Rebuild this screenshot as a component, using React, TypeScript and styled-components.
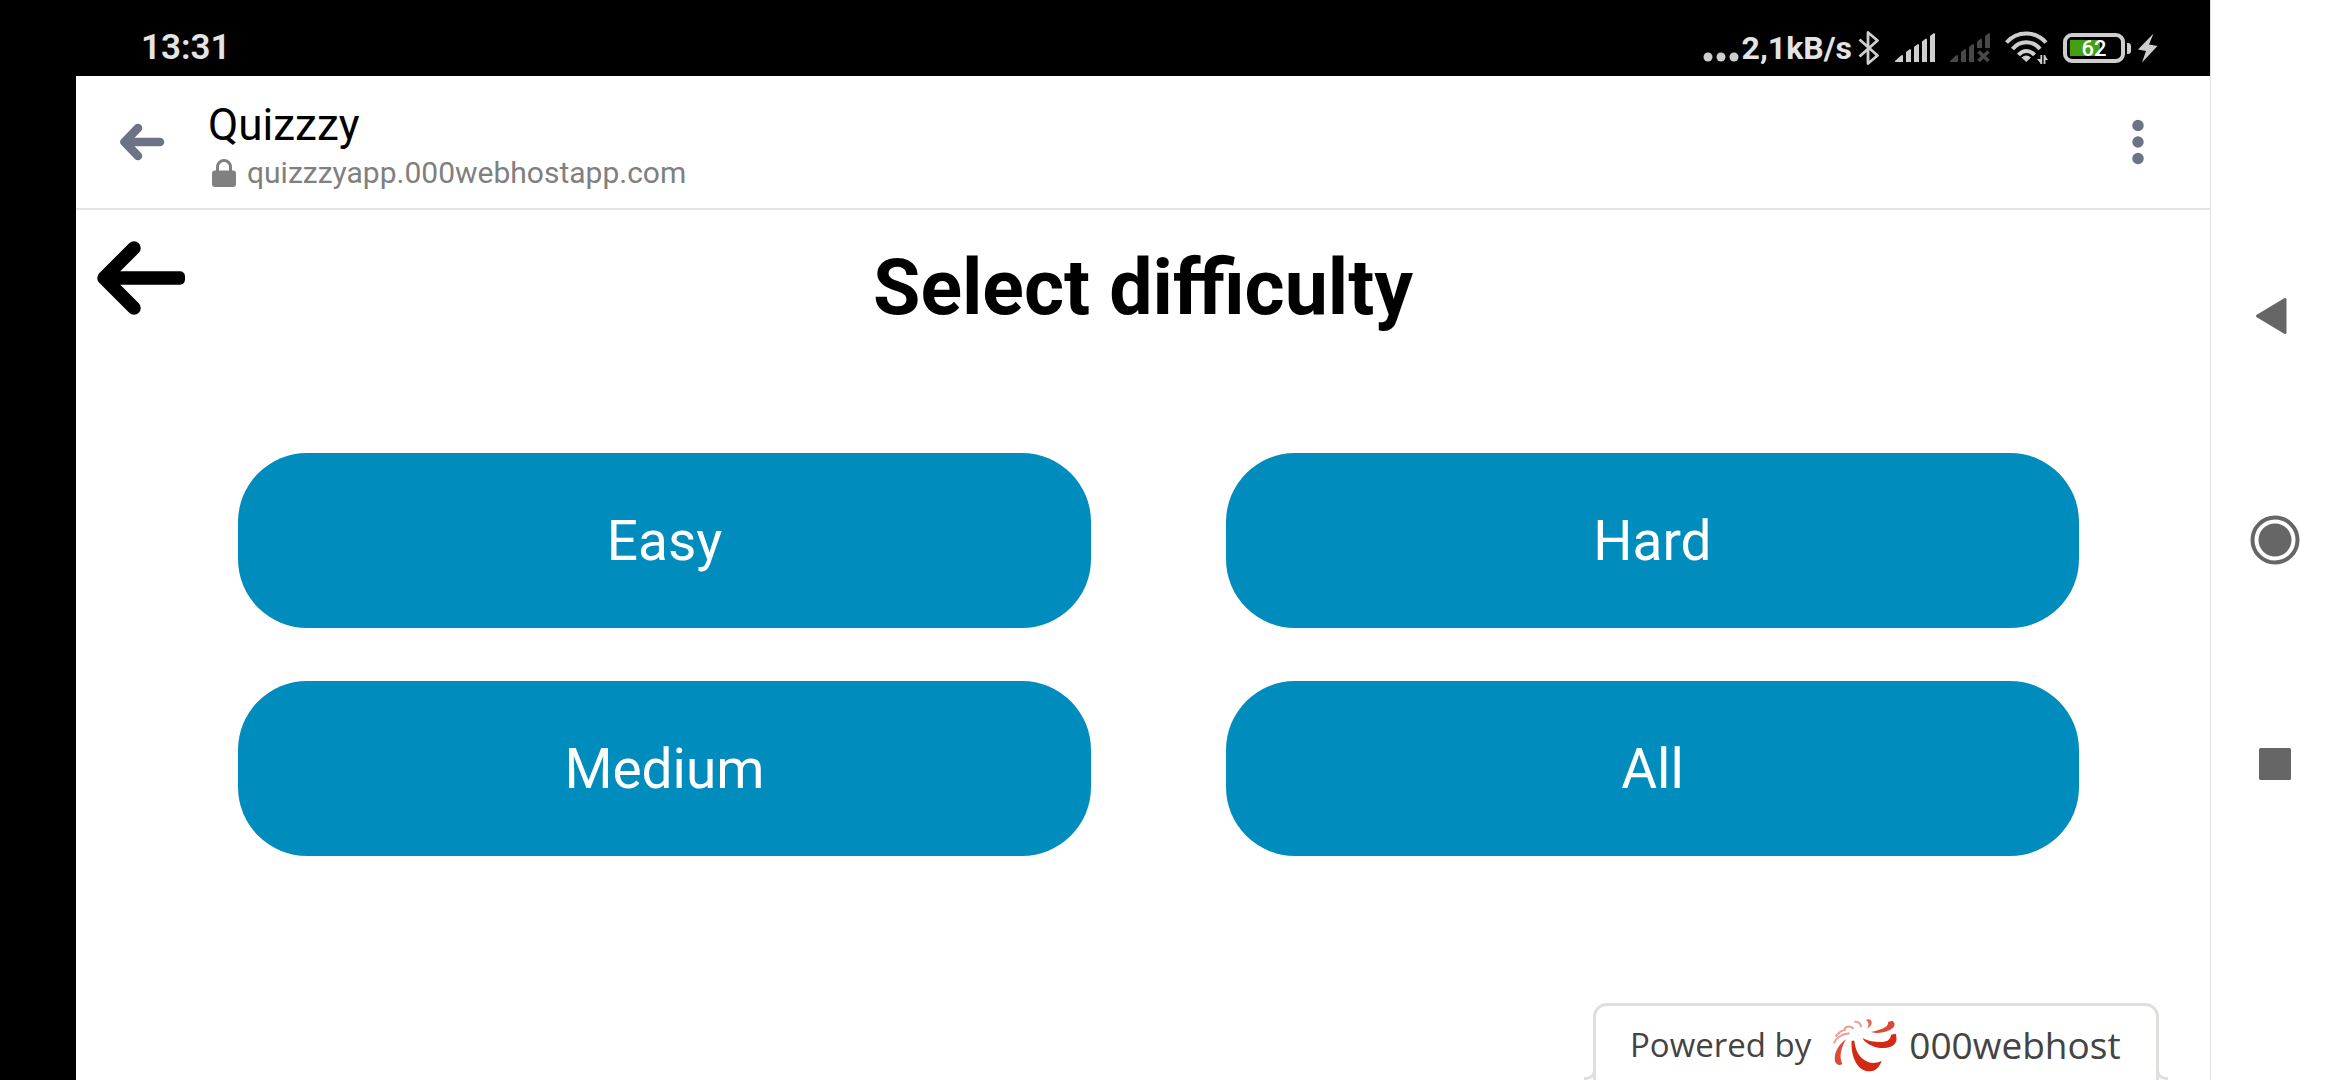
import React from "react";
import styled, { createGlobalStyle } from "styled-components";

const GlobalStyle = createGlobalStyle`
  *, *::before, *::after { box-sizing: border-box; }
  html, body { margin: 0; background: #fff; }
  body { font-family: Roboto, "Liberation Sans", sans-serif; overflow: hidden; }
  button { font: inherit; border: 0; padding: 0; background: none; cursor: pointer; }
  svg { display: block; flex: none; }
`;

const Screen = styled.div`
  display: grid;
  grid-template-columns: minmax(0, 1fr) 130px;
  min-height: 100vh;
`;

const Device = styled.div`
  display: flex;
  flex-direction: column;
  background: #000;
`;

const StatusBar = styled.div`
  display: flex;
  align-items: center;
  justify-content: space-between;
  height: 76px;
  padding: 20px 52px 0 141px;
  color: #e4e4e4;
  font-size: 35px;
  line-height: 56px;
  font-weight: 600;
`;

const StatusIcons = styled.div`
  display: flex;
  align-items: center;
  gap: 15px;
`;

const Speed = styled.div`
  display: flex;
  align-items: center;
  gap: 3px;
  margin-right: -9px;
  font-size: 32px;
  font-weight: 700;
`;

const Power = styled.div`
  display: flex;
  align-items: center;
  gap: 2px;
`;

const Battery = styled.div<{ $level: number }>`
  display: flex;
  align-items: center;
  justify-content: center;
  width: 62px;
  height: 30px;
  border: 4px solid #cecece;
  border-radius: 9px;
  background: linear-gradient(#43a010, #43a010) 3px 3px / ${(p) => Math.round(p.$level * 0.48)}px 16px no-repeat;
  color: #fff;
  font-size: 22px;
  line-height: 22px;
  padding-top: 2px;
  font-weight: 500;
`;

const BatteryTip = styled.span`
  width: 4px;
  height: 11px;
  margin-right: 5px;
  border-radius: 0 3px 3px 0;
  background: #cecece;
`;

const Browser = styled.div`
  flex: 1;
  display: flex;
  flex-direction: column;
  margin-left: 76px;
  background: #fff;
`;

const AppBar = styled.header`
  display: flex;
  align-items: center;
  height: 134px;
  padding: 0 64px 0 42px;
  border-bottom: 2px solid #e4e4e4;
`;

const Site = styled.div`
  flex: 1;
  margin-left: 42px;
  padding-top: 9px;
`;

const SiteName = styled.div`
  font-size: 44px;
  line-height: 52px;
  color: #000;
`;

const SiteUrl = styled.div`
  display: flex;
  align-items: center;
  gap: 11px;
  padding-left: 4px;
  font-size: 30px;
  line-height: 44px;
  color: #808080;
`;

const Page = styled.main`
  flex: 1;
  display: flex;
  flex-direction: column;
`;

const TitleRow = styled.div`
  display: grid;
  grid-template-columns: 130px 1fr 130px;
  align-items: start;
  padding-top: 28px;
`;

const BackButton = styled.button`
  justify-self: start;
  margin-left: 18px;
`;

const Title = styled.h1`
  margin: 0;
  padding-top: 4px;
  text-align: center;
  font-size: 77px;
  line-height: 92px;
  font-weight: 700;
  color: #000;
`;

const Choices = styled.div`
  display: grid;
  grid-template-columns: 1fr 1fr;
  gap: 53px 135px;
  padding: 119px 131px 0 162px;
`;

const Choice = styled.button`
  height: 175px;
  border-radius: 69px;
  background: #008cbc;
  color: #fff;
  font-size: 55px;
  line-height: 66px;
`;

const HostBadge = styled.a`
  position: relative;
  display: flex;
  align-items: center;
  align-self: flex-end;
  gap: 22px;
  width: 566px;
  height: 77px;
  margin: auto 51px 0 0;
  padding: 4px 0 0 34px;
  border: 3px solid #dfdfdb;
  border-bottom: 0;
  border-radius: 14px 14px 0 0;
  background: #fff;
  color: #444;
  font-family: "Open Sans", "Noto Sans", sans-serif;
  font-size: 33px;
  line-height: 48px;
  text-decoration: none;

  &::before, &::after {
    content: "";
    position: absolute;
    bottom: 0;
    width: 12px;
    height: 10px;
    background: #fff;
    border-bottom: 3px solid #dfdfdb;
  }
  &::before {
    left: -12px;
    border-right: 3px solid #dfdfdb;
    border-bottom-right-radius: 10px;
  }
  &::after {
    right: -12px;
    border-left: 3px solid #dfdfdb;
    border-bottom-left-radius: 10px;
  }
`;

const HostName = styled.span`
  font-size: 37px;
  margin-left: -10px;
`;

const NavBar = styled.nav`
  display: flex;
  flex-direction: column;
  justify-content: center;
  padding-right: 2px;
  border-left: 1px solid #e0e0e0;
  background: #fff;
`;

const NavButton = styled.button`
  display: flex;
  align-items: center;
  justify-content: center;
  height: 224px;
`;

const IconButton = styled.button`
  display: block;
`;

function Bluetooth() {
  return (
    <svg width="22" height="36" viewBox="0 0 22 36" fill="none" stroke="#cecece" strokeWidth="2.8" strokeLinejoin="round">
      <path d="M1.500 9.500 L19.500 25.500 L10 33.500 V2.500 L19.500 10.500 L1.500 26.500" />
    </svg>
  );
}

function Signal({ off = false }: { off?: boolean }) {
  const end = off ? 15 : 29;
  return (
    <svg width="40" height="30" viewBox="0 0 40 30" fill={off ? "#484848" : "#cecece"}>
      <path d="M0 29 V28 L6 22.500 Q8 21.500 8 23 V29 Z" />
      <path d="M11 29 V19 L14.500 16.300 Q16 15.800 16 17 V29 Z" />
      <path d="M19 29 V14 L22.500 11.300 Q24 10.800 24 12 V29 Z" />
      <path d={`M27 ${end} V8.500 L30.500 5.800 Q32 5.300 32 6.500 V${end} Z`} />
      <path d={`M35 ${end} V3 L38.500 0.300 Q40 0 40 1 V${end} Z`} />
      {off && <path d="M28.500 18.500 L38.500 28 M38.500 18.500 L28.500 28" stroke="#484848" strokeWidth="3.600" />}
    </svg>
  );
}

function Wifi() {
  return (
    <svg width="43" height="34" viewBox="0 0 43 34" fill="none" stroke="#cecece" strokeWidth="4">
      <path d="M1.500 11.500 C12 -0.500 30 -0.500 41 11.500" />
      <path d="M7.500 18 C15 9 27.500 9 35 18" />
      <path d="M13.500 24 C18 18.500 25 18.500 29.500 24" />
      <path d="M16.500 26.500 Q21.300 22.500 26 26.500 L21.300 31 Z" fill="#cecece" stroke="none" />
      <path d="M36.300 24 V33 M39.500 24 V33" strokeWidth="1.800" />
      <path d="M32 28 H36 V33 Z M43 29 H39.500 V24 Z" fill="#cecece" stroke="none" />
    </svg>
  );
}

function HostLogo() {
  return (
    <svg width="64" height="54" viewBox="42 48 192 162" fill="#d42a14">
      <path d="M98 116 C94 165 118 216 160 207 C175 203 183 190 188 176 C170 185 152 185 137 175 C120 163 109 145 106 116 Z" />
      <path d="M130 108 C148 136 190 144 215 134 C234 126 235 110 230 95 L216 98 C215 112 205 120 185 120 C165 120 148 117 130 108 Z" />
      <path d="M156 90 C180 97 206 90 222 78 C229 70 228 61 220 56 L207 60 C210 72 195 82 156 90 Z" opacity="0.850" />
      <path d="M140 54 C152 49 159 54 158 64 C157 71 152 76 144 80 C150 70 151 60 140 54 Z" opacity="0.700" />
      <path d="M82 111 C56 130 44 155 48 178 C52 189 62 192 70 186 C60 165 65 138 82 111 Z" opacity="0.850" />
      <g fill="none" stroke="#d42a14" strokeWidth="6" opacity="0.450">
        <path d="M44 124 C52 106 70 96 92 94" />
        <path d="M50 104 C58 92 68 85 80 84" />
        <path d="M76 86 C76 74 90 68 104 80" />
        <path d="M106 60 C116 58 124 64 127 76" />
      </g>
    </svg>
  );
}

const levels = ["Easy", "Hard", "Medium", "All"];

export default function App() {
  return (
    <>
      <GlobalStyle />
      <Screen>
        <Device>
          <StatusBar>
            <time>13:31</time>
            <StatusIcons>
              <Speed>
                <svg width="36" height="30" viewBox="0 0 36 30" fill="#cecece">
                  <circle cx="5" cy="24" r="4.500" />
                  <circle cx="18" cy="24" r="4.500" />
                  <circle cx="31" cy="24" r="4.500" />
                </svg>
                <span>2,1kB/s</span>
              </Speed>
              <Bluetooth />
              <Signal />
              <Signal off />
              <Wifi />
              <Power>
                <Battery $level={62}>62</Battery>
                <BatteryTip />
                <svg width="20" height="30" viewBox="0 0 20 30" fill="#cecece">
                  <path d="M15.500 0.500 L0 16.500 L8 18 L4 29.500 L19.500 13 L11 11.500 Z" />
                </svg>
              </Power>
            </StatusIcons>
          </StatusBar>
          <Browser>
            <AppBar>
              <IconButton aria-label="Back">
                <svg width="48" height="40" viewBox="0 0 48 40" fill="none" stroke="#6c7387" strokeWidth="8.500" strokeLinecap="round" strokeLinejoin="round">
                  <path d="M20 6 L6.500 20 L20 34 M8 20 H42" />
                </svg>
              </IconButton>
              <Site>
                <SiteName>Quizzzy</SiteName>
                <SiteUrl>
                  <svg width="24" height="28" viewBox="0 0 24 28">
                    <path d="M5.500 13 V8 A6.500 6.500 0 0 1 18.500 8 V13" fill="none" stroke="#808080" strokeWidth="3" />
                    <rect y="11.500" width="24" height="16.500" rx="3" fill="#808080" />
                  </svg>
                  <span>quizzzyapp.000webhostapp.com</span>
                </SiteUrl>
              </Site>
              <IconButton aria-label="More options">
                <svg width="16" height="46" viewBox="0 0 16 46" fill="#6c7387">
                  <circle cx="8" cy="6.500" r="5.700" />
                  <circle cx="8" cy="23" r="5.700" />
                  <circle cx="8" cy="39.500" r="5.700" />
                </svg>
              </IconButton>
            </AppBar>
            <Page>
              <TitleRow>
                <BackButton aria-label="Go back">
                  <svg width="94" height="80" viewBox="0 0 94 80" fill="none" stroke="#000" strokeWidth="13.500" strokeLinecap="round" strokeLinejoin="round">
                    <path d="M40 10 L10 40 L40 70" />
                    <rect x="10" y="33.250" width="81" height="13.500" rx="5" fill="#000" stroke="none" />
                  </svg>
                </BackButton>
                <Title>Select difficulty</Title>
              </TitleRow>
              <Choices>
                {levels.map((level) => (
                  <Choice key={level}>{level}</Choice>
                ))}
              </Choices>
              <HostBadge href="#">
                <span>Powered by</span>
                <HostLogo />
                <HostName>000webhost</HostName>
              </HostBadge>
            </Page>
          </Browser>
        </Device>
        <NavBar>
          <NavButton aria-label="Back">
            <svg width="48" height="48" viewBox="0 0 48 48" fill="#666" stroke="#666" strokeWidth="3" strokeLinejoin="round">
              <path d="M6.500 24 L34 7.500 V40.500 Z" />
            </svg>
          </NavButton>
          <NavButton aria-label="Home">
            <svg width="50" height="50" viewBox="0 0 50 50" fill="#666">
              <circle cx="25" cy="25" r="16.500" />
              <circle cx="25" cy="25" r="22.500" fill="none" stroke="#666" strokeWidth="4" />
            </svg>
          </NavButton>
          <NavButton aria-label="Recent apps">
            <svg width="32" height="32" viewBox="0 0 32 32" fill="#666">
              <rect width="32" height="32" rx="1.500" />
            </svg>
          </NavButton>
        </NavBar>
      </Screen>
    </>
  );
}
